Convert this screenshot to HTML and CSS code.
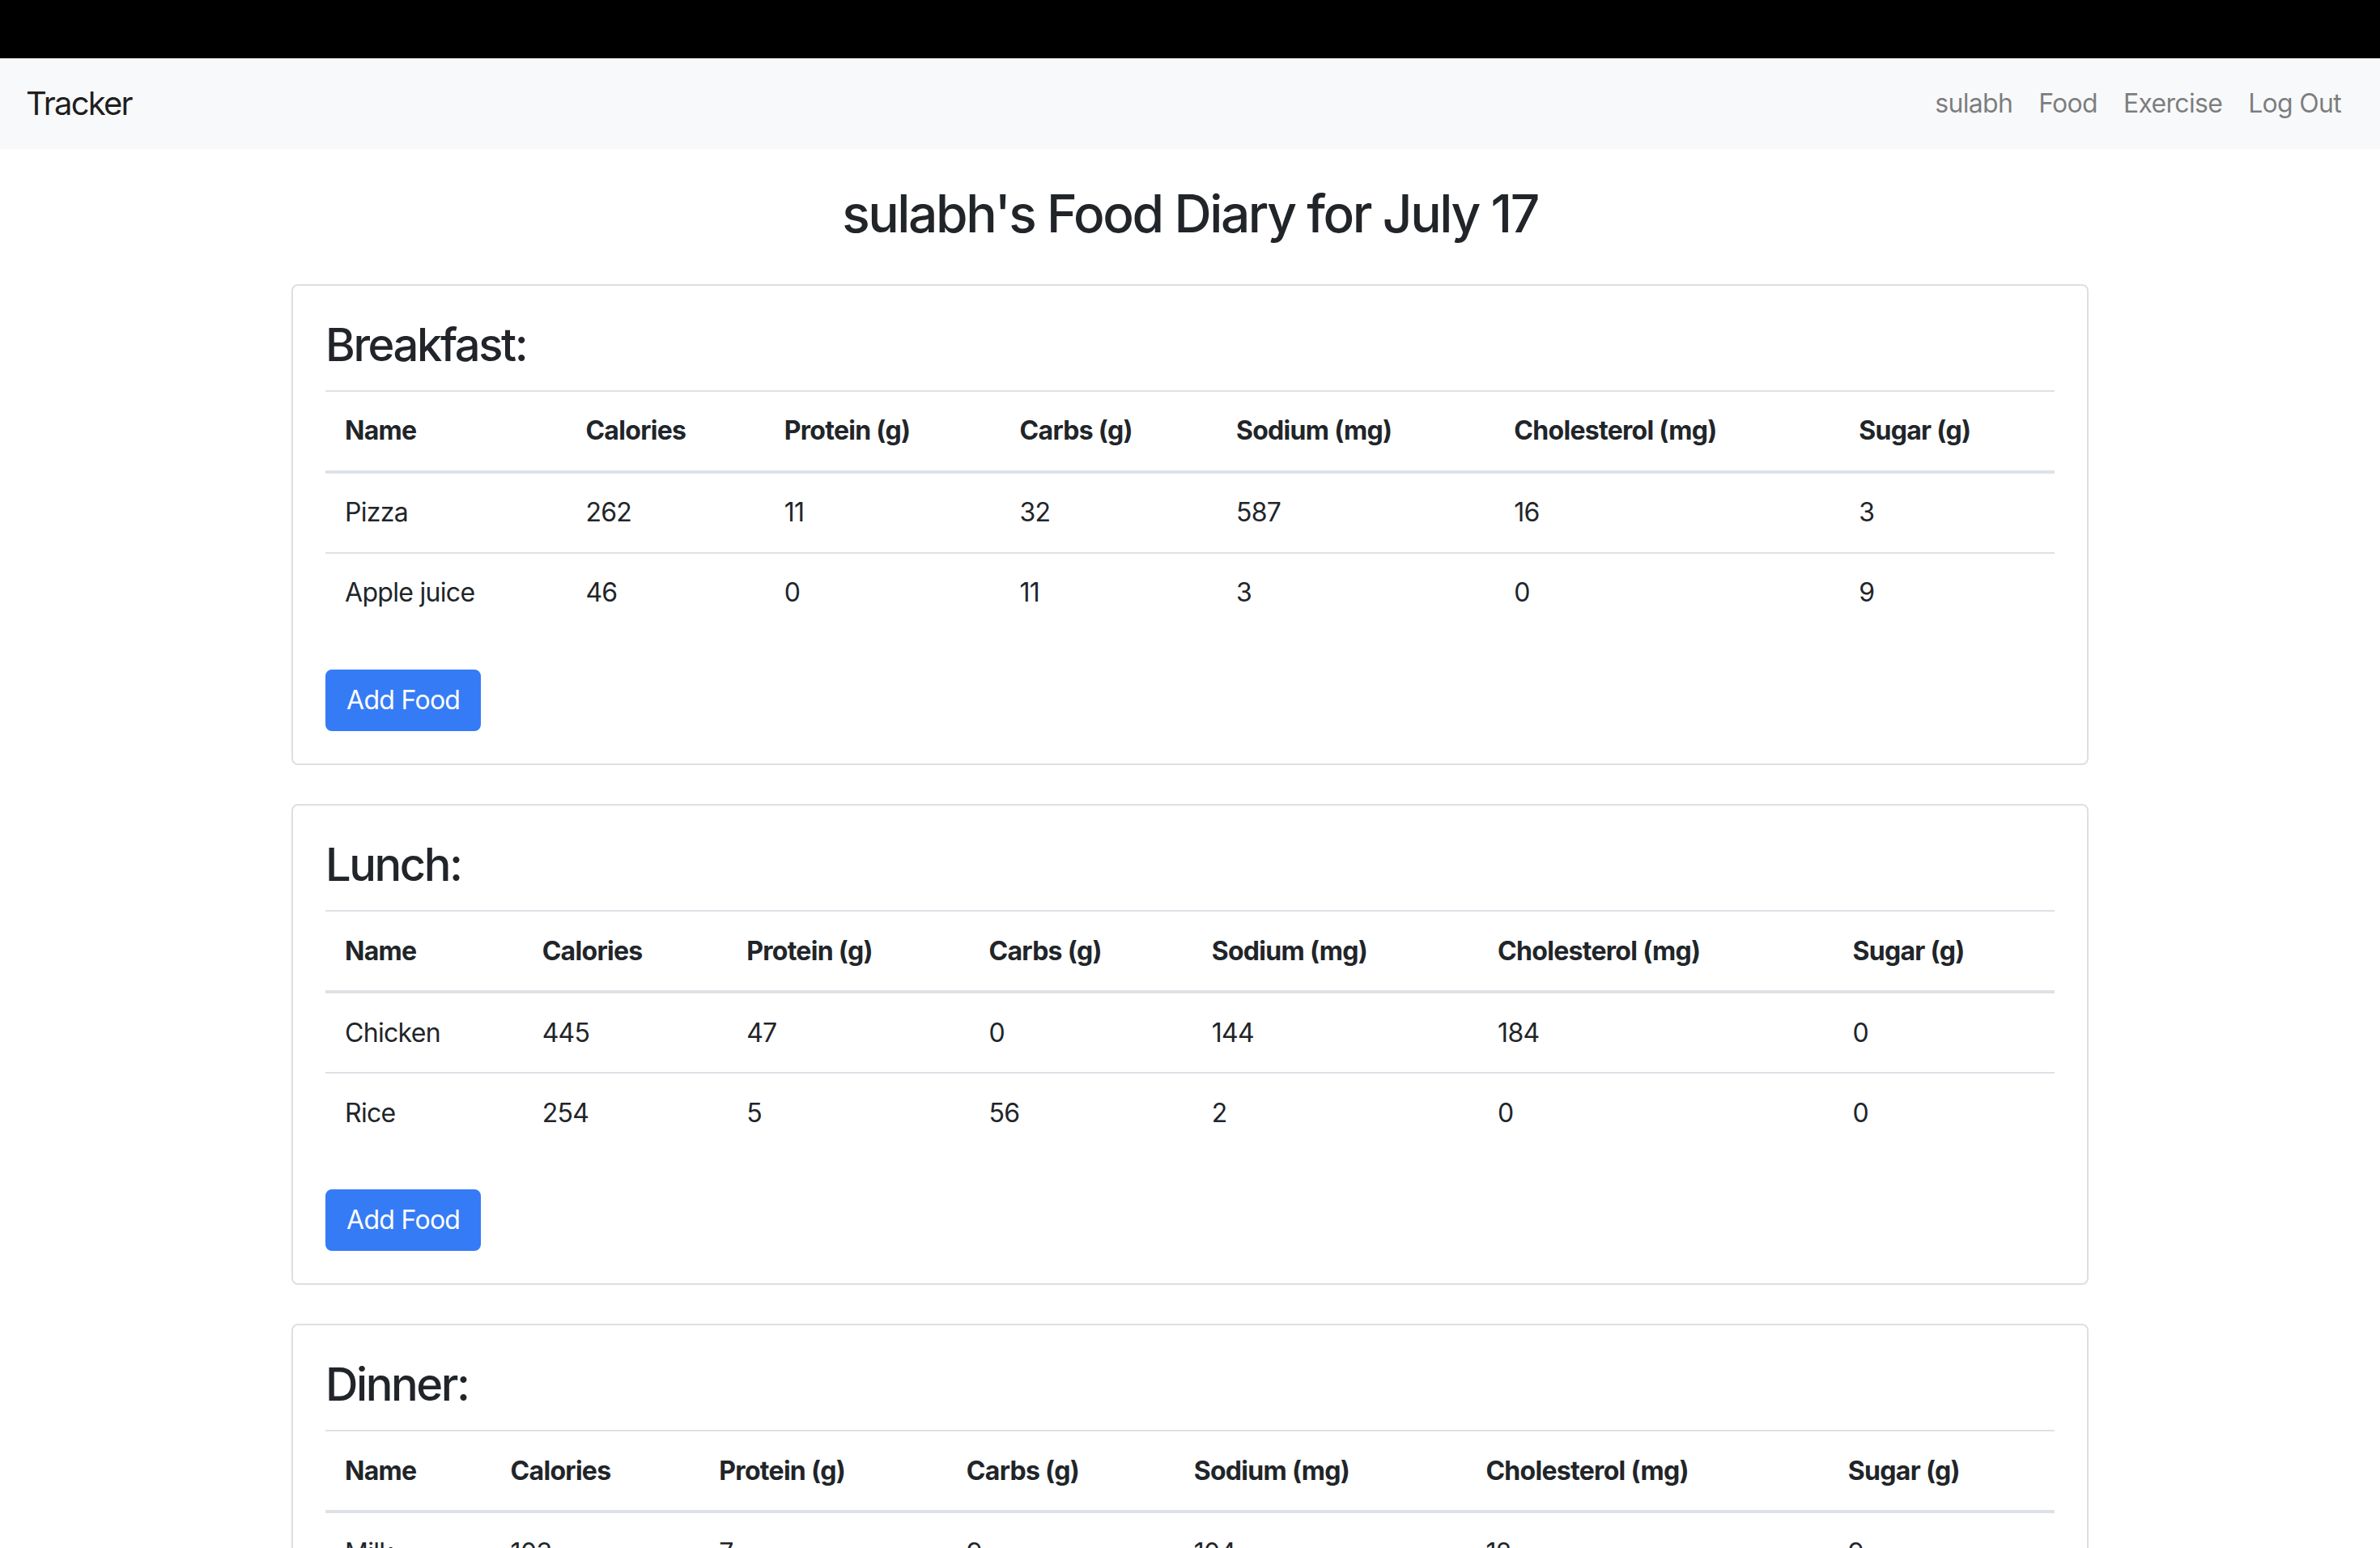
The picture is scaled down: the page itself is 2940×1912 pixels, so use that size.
FILE: index.html
```html
<!DOCTYPE html>
<html lang="en">
<head>
<meta charset="utf-8">
<title>Tracker</title>
<link rel="stylesheet" href="styles.css">
</head>
<body>
<div class="topbar"></div>
<nav class="navbar">
  <a class="brand" href="#">Tracker</a>
  <ul class="nav">
    <li><a class="nav-link" href="#">sulabh</a></li>
    <li><a class="nav-link" href="#">Food</a></li>
    <li><a class="nav-link" href="#">Exercise</a></li>
    <li><a class="nav-link" href="#">Log Out</a></li>
  </ul>
</nav>
<main class="container">
  <h2 class="page-title">sulabh's Food Diary for July 17</h2>

  <section class="card">
    <h3 class="meal-title">Breakfast:</h3>
    <table class="table">
      <thead>
        <tr><th>Name</th><th>Calories</th><th>Protein (g)</th><th>Carbs (g)</th><th>Sodium (mg)</th><th>Cholesterol (mg)</th><th>Sugar (g)</th></tr>
      </thead>
      <tbody>
        <tr><td>Pizza</td><td>262</td><td>11</td><td>32</td><td>587</td><td>16</td><td>3</td></tr>
        <tr><td>Apple juice</td><td>46</td><td>0</td><td>11</td><td>3</td><td>0</td><td>9</td></tr>
      </tbody>
    </table>
    <a class="btn" href="#">Add Food</a>
  </section>

  <section class="card">
    <h3 class="meal-title">Lunch:</h3>
    <table class="table">
      <thead>
        <tr><th>Name</th><th>Calories</th><th>Protein (g)</th><th>Carbs (g)</th><th>Sodium (mg)</th><th>Cholesterol (mg)</th><th>Sugar (g)</th></tr>
      </thead>
      <tbody>
        <tr><td>Chicken</td><td>445</td><td>47</td><td>0</td><td>144</td><td>184</td><td>0</td></tr>
        <tr><td>Rice</td><td>254</td><td>5</td><td>56</td><td>2</td><td>0</td><td>0</td></tr>
      </tbody>
    </table>
    <a class="btn" href="#">Add Food</a>
  </section>

  <section class="card">
    <h3 class="meal-title">Dinner:</h3>
    <table class="table">
      <thead>
        <tr><th>Name</th><th>Calories</th><th>Protein (g)</th><th>Carbs (g)</th><th>Sodium (mg)</th><th>Cholesterol (mg)</th><th>Sugar (g)</th></tr>
      </thead>
      <tbody>
        <tr><td>Milk</td><td>103</td><td>7</td><td>9</td><td>104</td><td>12</td><td>9</td></tr>
      </tbody>
    </table>
    <a class="btn" href="#">Add Food</a>
  </section>
</main>
</body>
</html>
```
FILE: styles.css
```css
* { box-sizing: border-box; }

body {
  margin: 0;
  font-family: Inter, "Noto Sans", "Liberation Sans", sans-serif;
  font-size: 32px;
  line-height: 1.5;
  letter-spacing: -0.7px;
  color: #212529;
  background: #fff;
}

.topbar {
  height: 72px;
  background: #000;
}

.navbar {
  display: flex;
  align-items: center;
  justify-content: space-between;
  padding: 16px 32px;
  background: #f8f9fa;
}

.brand {
  font-size: 40px;
  line-height: 1.5;
  letter-spacing: -1.8px;
  padding: 10px 0;
  color: rgba(0, 0, 0, 0.9);
  text-decoration: none;
}

.nav {
  display: flex;
  list-style: none;
  margin: 0;
  padding: 0;
}

.nav-link {
  display: block;
  padding: 16px 16px;
  color: rgba(0, 0, 0, 0.5);
  text-decoration: none;
}

.container {
  width: 2280px;
  margin: 0 auto;
  padding: 0 30px;
}

.page-title {
  text-align: center;
  font-size: 64px;
  font-weight: 500;
  line-height: 1.2;
  letter-spacing: -2.4px;
  margin: 42px 0 48px;
}

.card {
  border: 2px solid rgba(0, 0, 0, 0.125);
  border-radius: 8px;
  padding: 40px;
  margin-bottom: 48px;
}

.meal-title {
  font-size: 56px;
  font-weight: 500;
  line-height: 1.2;
  letter-spacing: -2.4px;
  margin: 0 0 22px;
}

.table {
  width: 100%;
  border-collapse: collapse;
  margin-bottom: 46px;
}

.table th,
.table td {
  padding: 24.5px 24px;
  border-top: 2px solid #dee2e6;
  text-align: left;
  vertical-align: top;
}

.table th {
  font-weight: 700;
}

.table thead th {
  vertical-align: bottom;
  border-bottom: 4px solid #dee2e6;
}

.btn {
  display: inline-block;
  padding: 12px 24px;
  font-size: 32px;
  line-height: 1.5;
  color: #fff;
  background: #367bf6;
  border: 2px solid #367bf6;
  border-radius: 8px;
  text-decoration: none;
}
```
